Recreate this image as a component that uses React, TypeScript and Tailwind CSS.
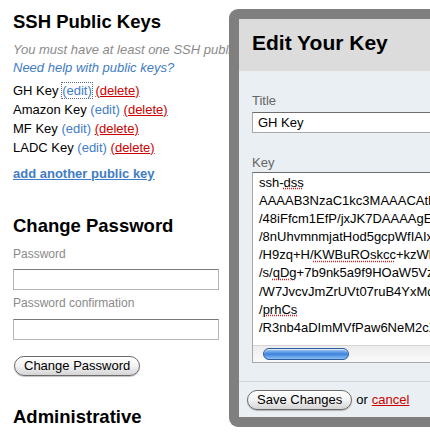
import React from "react";

const keys = ["GH Key", "Amazon Key", "MF Key", "LADC Key"];

const keyLines: React.ReactNode[] = [
  <>
    ssh-<span className="underline decoration-dotted decoration-[#d22]">dss</span>
  </>,
  "AAAAB3NzaC1kc3MAAACAtRkdQ",
  "/48iFfcm1EfP/jxJK7DAAAAgEyz",
  "/8nUhvmnmjatHod5gcpWfIAIxd",
  <>
    /H9zq+H/<span className="underline decoration-dotted decoration-[#d22]">KWBuROskcc</span>+kzWk
  </>,
  <>
    /s/<span className="underline decoration-dotted decoration-[#d22]">qDg</span>+7b9nk5a9f9HOaW5Vz
  </>,
  "/W7JvcvJmZrUVt07ruB4YxMq",
  <>
    /<span className="underline decoration-dotted decoration-[#d22]">prhCs</span>
  </>,
  "/R3nb4aDImMVfPaw6NeM2cX",
];

function PillButton({ label }: { label: string }) {
  return (
    <button className="h-[20px] px-[9px] rounded-full border border-[#6b6b6b] bg-gradient-to-b from-white via-[#f3f3f3] to-[#d4d4d4] shadow-[0_1px_1px_rgba(0,0,0,0.25)] text-[13px] leading-[18px] text-black">
      {label}
    </button>
  );
}

export default function App() {
  return (
    <div
      className="relative w-[430px] h-[436px] overflow-hidden bg-white text-black"
      style={{ fontFamily: '"Liberation Sans", Arial, sans-serif' }}
    >
      {/* account page */}
      <div className="flex flex-col pl-[13px] pt-[11px]">
        <h2 className="text-[18.5px] leading-[22px] font-bold">SSH Public Keys</h2>
        <p className="mt-[8px] text-[13px] leading-[18px] italic text-[#8a8a8a] whitespace-nowrap">
          You must have at least one SSH public key to use the service.
        </p>
        <p className="text-[13px] leading-[18px] italic text-[#3f7cc4]">
          Need help with public keys?
        </p>
        <ul className="mt-[4px] text-[13px] leading-[19px]">
          {keys.map((k, i) => (
            <li key={k}>
              {k}{" "}
              <span
                className={`text-[#3f7cc4] ${
                  i === 0 ? "outline outline-1 outline-dotted outline-[#5a6b80]" : ""
                }`}
              >
                (edit)
              </span>{" "}
              <span className="text-[#cc0000] underline">(delete)</span>
            </li>
          ))}
        </ul>
        <a className="mt-[8px] text-[13px] leading-[18px] font-bold text-[#3f7cc4] underline">
          add another public key
        </a>

        <h2 className="mt-[32px] text-[18.5px] leading-[22px] font-bold">Change Password</h2>
        <label className="mt-[9px] text-[12px] leading-[16px] text-[#8a8a8a]">Password</label>
        <div className="mt-[7px] w-[206px] h-[21px] border border-[#b5b5b5] border-t-[#7a7a7a] bg-white" />
        <label className="mt-[5px] text-[12px] leading-[16px] text-[#8a8a8a]">
          Password confirmation
        </label>
        <div className="mt-[8px] w-[206px] h-[21px] border border-[#b5b5b5] border-t-[#7a7a7a] bg-white" />
        <div className="mt-[13px] pl-[1px]">
          <PillButton label="Change Password" />
        </div>
        <h2 className="mt-[29px] text-[18.5px] leading-[22px] font-bold">Administrative</h2>
      </div>

      {/* edit key modal */}
      <div className="absolute left-[229px] top-[9px] w-[300px] h-[418px] rounded-l-[9px] bg-[#7f7f7f] py-[10px] pl-[10px]">
        <div className="flex flex-col h-full bg-[#e9eff2]">
          <div className="h-[52px] bg-[#dcdcdc] pl-[13px] pt-[12px]">
            <h3 className="text-[21px] leading-[24px] font-bold">Edit Your Key</h3>
          </div>
          <div className="flex-1 flex flex-col pl-[13px] pt-[22px]">
            <label className="text-[13px] leading-[16px] text-[#666]">Title</label>
            <div className="mt-[3px] h-[21px] border border-[#a8a8a8] border-t-[#6e6e6e] bg-white pl-[5px] text-[13px] leading-[19px]">
              GH Key
            </div>
            <label className="mt-[22px] text-[13px] leading-[16px] text-[#666]">Key</label>
            <div className="mt-[1px] h-[191px] flex flex-col border border-[#a8a8a8] border-t-[#6e6e6e] bg-white">
              <div className="flex-1 overflow-hidden pl-[6px] pt-[1px] text-[13px] leading-[18.1px] whitespace-nowrap">
                {keyLines.map((l, i) => (
                  <div key={i}>{l}</div>
                ))}
              </div>
              <div className="h-[17px] border-t border-[#d6d6d6] bg-gradient-to-b from-[#ececec] to-[#fafafa] pl-[10px] pt-[2px]">
                <div className="w-[86px] h-[12px] rounded-full border border-[#2d5c9e] bg-gradient-to-b from-[#a8cdf3] via-[#3b82dd] to-[#8ec0f2] shadow-[inset_0_1px_0_rgba(255,255,255,0.6)]" />
              </div>
            </div>
          </div>
          <div className="h-[36px] border-t border-[#d4d8db] pl-[8px] pt-[8px] flex items-start text-[13px] leading-[20px]">
            <PillButton label="Save Changes" />
            <span className="ml-[4px]">or</span>
            <a className="ml-[4px] text-[#cc0000] underline">cancel</a>
          </div>
        </div>
      </div>
    </div>
  );
}
